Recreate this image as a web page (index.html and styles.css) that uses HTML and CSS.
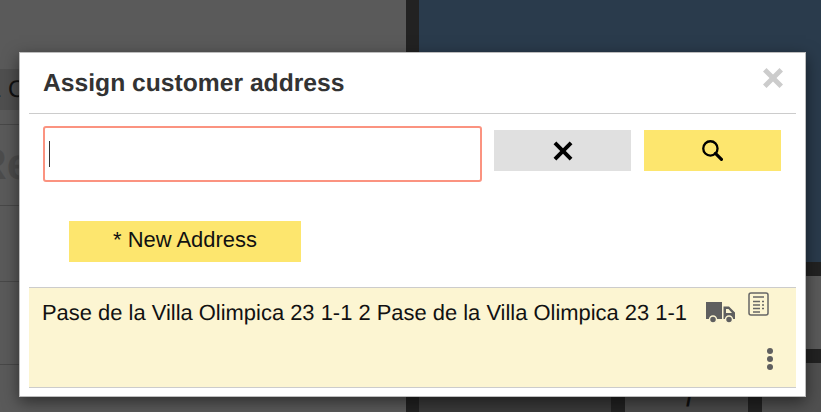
FILE: index.html
```html
<!DOCTYPE html>
<html lang="en">

<head>
    <meta charset="UTF-8">
    <meta name="viewport" content="width=device-width, initial-scale=1.0">
    <title>Assign customer address</title>
    <link rel="stylesheet" href="styles.css">
</head>

<body>
    <!-- page behind the modal -->
    <div class="page">
        <div class="left-panel">
            <div class="order-bar"><span class="order-text">1 C</span></div>
            <div class="left-row left-title"><span class="ref-text">Re</span></div>
            <div class="left-row left-row-b"></div>
            <div class="left-row left-row-c"></div>
        </div>
        <div class="right-panel">
            <div class="navy-box"></div>
            <div class="grey-box"></div>
            <div class="bottom-row">
                <div class="bottom-cell cell-dark"></div>
                <div class="bottom-cell cell-mid"><span class="cell-mark">/</span></div>
                <div class="bottom-cell cell-light"></div>
            </div>
        </div>
    </div>

    <!-- modal -->
    <div class="modal">
        <div class="modal-header">
            <h1 class="modal-title">Assign customer address</h1>
            <svg class="modal-close" viewBox="0 0 20 20">
                <path d="M3.500 0 10 6.500 16.500 0 20 3.500 13.500 10 20 16.500 16.500 20 10 13.500 3.500 20 0 16.500 6.500 10 0 3.500Z" />
            </svg>
        </div>

        <div class="search-row">
            <div class="search-input"><span class="caret"></span></div>
            <button class="btn btn-grey">
                <svg class="btn-icon" viewBox="0 0 18 18">
                    <path d="M3 0.500 9 6.500 15 0.500 17.500 3 11.500 9 17.500 15 15 17.500 9 11.500 3 17.500 0.500 15 6.500 9 0.500 3Z" />
                </svg>
            </button>
            <button class="btn btn-yellow">
                <svg class="btn-icon icon-search" viewBox="0 0 20 20">
                    <circle cx="8" cy="8" r="6.800" fill="none" stroke="#000" stroke-width="2.200" />
                    <path d="M12.800 12.800 18.500 18.500" fill="none" stroke="#000" stroke-width="3" stroke-linecap="round" />
                </svg>
            </button>
        </div>

        <button class="btn btn-yellow btn-new">* New Address</button>

        <div class="address-row">
            <div class="address-text">Pase de la Villa Olimpica 23 1-1 2 Pase de la Villa Olimpica 23 1-1</div>
            <div class="address-actions">
                <div class="action-icons">
                    <svg class="icon-truck" viewBox="0 0 29 21">
                        <path d="M0 0H16V17H0Z" />
                        <path d="M17.500 4.500H23L29 10.500V17H17.500ZM20 7V11H26L22.500 7Z" fill-rule="evenodd" />
                        <circle cx="7" cy="17.500" r="3.500" stroke="#fcf5d2" stroke-width="1.500" />
                        <circle cx="23" cy="17.500" r="3.500" stroke="#fcf5d2" stroke-width="1.500" />
                    </svg>
                    <svg class="icon-doc" viewBox="0 0 21 24">
                        <rect x="1" y="1" width="19" height="22" rx="2" fill="none" stroke="#666" stroke-width="1.500" />
                        <path d="M5 5H16M5 9.500H12M14 9.500H16M5 13H12M14 13H16M5 16.500H12M14 16.500H16M5 20H12" fill="none" stroke="#666" stroke-width="1.300" />
                    </svg>
                </div>
                <div class="kebab">
                    <span class="kebab-dot"></span>
                    <span class="kebab-dot"></span>
                    <span class="kebab-dot"></span>
                </div>
            </div>
        </div>
    </div>
</body>

</html>
```

FILE: styles.css
```css
body {
    margin: 0;
    height: 412px;
    overflow: hidden;
    background-color: #222222;
    font-family: "Liberation Sans", Arial, sans-serif;
    text-rendering: geometricPrecision;
}

.page {
    display: flex;
    gap: 13px;
    height: 412px;
}

/* left side behind the modal */
.left-panel {
    width: 406px;
    padding-top: 69px;
    box-sizing: border-box;
    background-color: #5a5a5a;
    overflow: hidden;
}

.order-bar {
    height: 41px;
    margin-bottom: 14px;
    background-color: #4f4f4f;
    display: flex;
    align-items: center;
}

.order-text {
    margin-left: -12px;
    font-size: 24px;
    color: #111111;
}

.left-row {
    border-top: 1px solid #484848;
    box-sizing: border-box;
}

.left-title {
    height: 81px;
    display: flex;
    align-items: center;
}

.ref-text {
    margin-left: -25px;
    font-size: 44px;
    font-weight: bold;
    color: #4c4c4c;
}

.left-row-b {
    height: 76px;
}

.left-row-c {
    height: 84px;
    border-bottom: 1px solid #484848;
}

/* right side behind the modal */
.right-panel {
    flex: 1;
    display: flex;
    flex-direction: column;
    gap: 14px;
}

.navy-box {
    height: 274px;
    background-color: #2a3b4c;
}

.grey-box {
    height: 77px;
    background-color: #5a5a5a;
}

.bottom-row {
    flex: 1;
    display: flex;
    gap: 14px;
}

.bottom-cell {
    overflow: hidden;
}

.cell-dark {
    width: 192px;
    background-color: #3a3a3a;
}

.cell-mid {
    width: 123px;
    background-color: #4a4a4a;
}

.cell-mark {
    display: block;
    margin: 23px 0 0 61px;
    font-size: 22px;
    font-weight: bold;
    color: #111111;
}

.cell-light {
    flex: 1;
    background-color: #505050;
}

/* modal */
.modal {
    position: absolute;
    left: 19px;
    top: 52px;
    width: 787px;
    height: 345px;
    box-sizing: border-box;
    padding: 0 9px;
    background-color: #ffffff;
    border: 1px solid #bdbdbd;
    box-shadow: 0 5px 15px rgba(0, 0, 0, 0.5);
}

.modal-header {
    height: 61px;
    box-sizing: border-box;
    display: flex;
    justify-content: space-between;
    border-bottom: 1px solid #cccccc;
}

.modal-title {
    margin: 16px 0 0 14px;
    font-size: 24.67px;
    line-height: 30px;
    font-weight: bold;
    color: #333333;
}

.modal-close {
    width: 20px;
    height: 20px;
    margin: 15px 13px 0 0;
    fill: #cccccc;
}

.search-row {
    display: flex;
    align-items: flex-start;
    margin: 12px 15px 0 14px;
}

.search-input {
    width: 439px;
    height: 56px;
    box-sizing: border-box;
    padding: 13px 4px;
    border: 2px solid #fb9380;
    border-radius: 3px;
    margin-right: 12px;
}

.caret {
    display: block;
    width: 1px;
    height: 26px;
    background-color: #333333;
}

.btn {
    width: 137px;
    height: 41px;
    padding: 0;
    border: none;
    display: flex;
    align-items: center;
    justify-content: center;
    font-family: inherit;
    color: #111111;
    cursor: pointer;
}

.search-row .btn {
    margin-top: 4px;
}

.btn-grey {
    background-color: #e0e0e0;
    margin-right: 13px;
}

.btn-yellow {
    background-color: #fde66e;
}

.btn-icon {
    width: 20px;
    height: 20px;
}

.icon-search {
    width: 21px;
    height: 21px;
}

.btn-new {
    width: 232px;
    margin: 39px 0 0 40px;
    padding-bottom: 4px;
    font-size: 21.93px;
}

.address-row {
    height: 101px;
    box-sizing: border-box;
    margin-top: 25px;
    padding: 4px 0 0 13px;
    display: flex;
    justify-content: space-between;
    background-color: #fcf5d2;
    border-top: 1px solid #cccccc;
    border-bottom: 1px solid #cccccc;
}

.address-text {
    margin-top: 8px;
    font-size: 21.93px;
    line-height: 26px;
    color: #111111;
}

.address-actions {
    width: 76px;
    margin-right: 14px;
    display: flex;
    flex-direction: column;
    align-items: flex-end;
}

.action-icons {
    display: flex;
    gap: 13px;
    margin-right: 13px;
    margin-left: auto;
}

.icon-truck {
    width: 29px;
    height: 21px;
    margin-top: 10px;
    fill: #5f5f5f;
}

.icon-doc {
    width: 21px;
    height: 24px;
}

.kebab {
    display: flex;
    flex-direction: column;
    gap: 2px;
    margin: 25px 9px 0 0;
}

.kebab-dot {
    width: 6px;
    height: 6px;
    border-radius: 50%;
    background-color: #5f5f5f;
}
```
